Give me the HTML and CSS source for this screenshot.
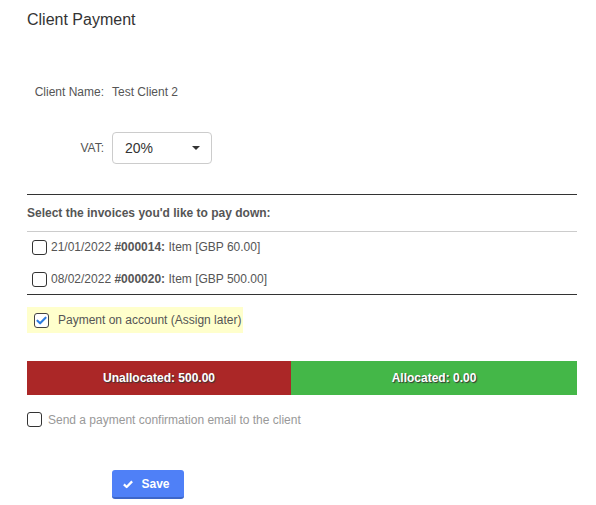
FILE: index.html
```html
<!DOCTYPE html>
<html>
<head>
<meta charset="utf-8">
<link rel="stylesheet" href="styles.css">
</head>
<body>
<div class="page">
  <h1 class="title">Client Payment</h1>

  <div class="field field-name">
    <span class="label">Client Name:</span>
    <span class="value">Test Client 2</span>
  </div>

  <div class="field field-vat">
    <span class="label">VAT:</span>
    <div class="select">
      <span class="select-text">20%</span>
      <span class="caret"></span>
    </div>
  </div>

  <div class="invoices">
    <div class="invoices-head">Select the invoices you'd like to pay down:</div>
    <div class="invoice-list">
      <label class="invoice"><span class="box"></span><span>21/01/2022 <b>#000014:</b> Item [GBP 60.00]</span></label>
      <label class="invoice"><span class="box"></span><span>08/02/2022 <b>#000020:</b> Item [GBP 500.00]</span></label>
    </div>
  </div>

  <div class="account">
    <span class="box checked"><svg viewBox="0 0 16 16" width="13" height="13"><path d="M3 8.2 L6.3 11.4 L13 4.6" fill="none" stroke="#2b7de0" stroke-width="2.6" stroke-linecap="round" stroke-linejoin="round"/></svg></span>
    <span>Payment on account (Assign later)</span>
  </div>

  <div class="allocation">
    <div class="alloc alloc-un">Unallocated: 500.00</div>
    <div class="alloc alloc-done">Allocated: 0.00</div>
  </div>

  <label class="email"><span class="box"></span><span>Send a payment confirmation email to the client</span></label>

  <div class="actions">
    <button class="save"><svg viewBox="0 0 16 16" width="12" height="12"><path d="M2.5 8.5 L6.2 12 L13.5 4.5" fill="none" stroke="#fff" stroke-width="3" stroke-linejoin="round"/></svg>Save</button>
  </div>
</div>
</body>
</html>
```
FILE: styles.css
```css
html, body {
  margin: 0;
  padding: 0;
  background: #fff;
}
body {
  font-family: "Liberation Sans", Arial, sans-serif;
  font-size: 12px;
  color: #555;
}
.page {
  padding: 10px 19px 0 27px;
  width: 550px;
}
.title {
  margin: 0;
  font-size: 16px;
  line-height: 20px;
  font-weight: normal;
  color: #333;
}
.field {
  display: flex;
  align-items: center;
  gap: 8px;
}
.label {
  width: 77px;
  text-align: right;
  color: #555;
}
.value {
  color: #555;
}
.field-name {
  margin-top: 54px;
  line-height: 16px;
}
.field-vat {
  margin-top: 32px;
}
.select {
  box-sizing: border-box;
  width: 100px;
  height: 32px;
  border: 1px solid #ccc;
  border-radius: 4px;
  display: flex;
  align-items: center;
  justify-content: space-between;
  padding: 0 11px 0 12px;
}
.select-text {
  font-size: 14px;
  color: #333;
}
.caret {
  width: 0;
  height: 0;
  border-left: 4px solid transparent;
  border-right: 4px solid transparent;
  border-top: 4px solid #333;
}
.invoices {
  margin-top: 30px;
  border-top: 1px solid #333;
  border-bottom: 1px solid #333;
}
.invoices-head {
  padding: 10px 0 10px;
  line-height: 16px;
  font-weight: bold;
  color: #555;
  border-bottom: 1px solid #ccc;
}
.invoice-list {
  display: flex;
  flex-direction: column;
  gap: 12px;
  padding: 5px 0 5px 5px;
}
.invoice {
  display: flex;
  align-items: center;
  gap: 4px;
  height: 20px;
}
.invoice b {
  color: #555;
}
.box {
  box-sizing: border-box;
  width: 15px;
  height: 15px;
  border: 1px solid #333;
  border-radius: 3px;
  background: #fff;
  display: inline-flex;
  align-items: center;
  justify-content: center;
  flex: none;
}
.box.checked {
  border-color: #444;
}
.account {
  margin-top: 12px;
  width: 216px;
  height: 26px;
  box-sizing: border-box;
  background: #ffffcc;
  display: flex;
  align-items: center;
  gap: 9px;
  padding-left: 7px;
  color: #555;
}
.allocation {
  margin-top: 28px;
  display: flex;
  height: 34px;
}
.alloc {
  display: flex;
  align-items: center;
  justify-content: center;
  color: #fff;
  font-weight: bold;
  text-shadow: 1px 1px 1px #333;
}
.alloc-un {
  width: 264px;
  background: #ab2727;
}
.alloc-done {
  flex: 1;
  background: #44b748;
}
.email {
  margin-top: 16px;
  display: flex;
  align-items: center;
  gap: 6px;
  height: 17px;
  color: #999;
}
.actions {
  margin-top: 42px;
  padding-left: 85px;
}
.save {
  box-sizing: border-box;
  width: 72px;
  height: 29px;
  border: none;
  border-bottom: 2px solid #3d66c9;
  border-radius: 3px;
  background: #4f80f7;
  color: #fff;
  font-family: "Liberation Sans", Arial, sans-serif;
  font-size: 12px;
  font-weight: bold;
  display: flex;
  align-items: center;
  justify-content: center;
  gap: 7px;
  padding: 0 4px 0 0;
}
```
